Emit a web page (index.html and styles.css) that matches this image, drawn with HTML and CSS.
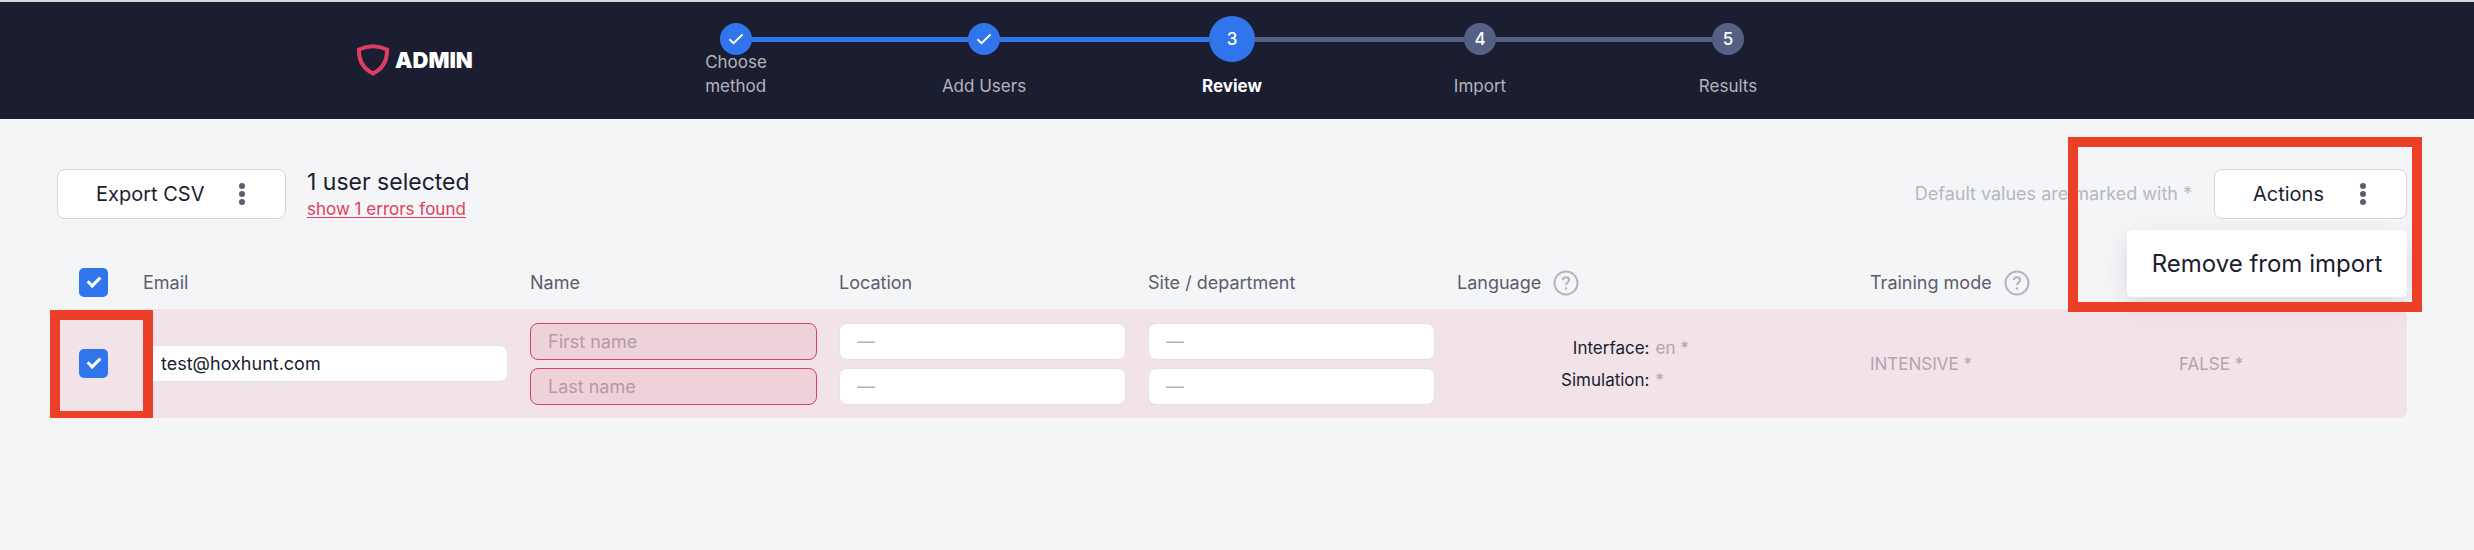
FILE: index.html
```html
<!DOCTYPE html>
<html lang="en">
<head>
    <meta charset="UTF-8">
    <meta name="viewport" content="width=device-width, initial-scale=1.0">
    <title>Admin - Review users</title>
    <link rel="stylesheet" href="styles.css">
</head>
<body>
    <header class="header">
        <div class="header-inner">
            <div class="logo">
                <svg width="32" height="32" viewBox="0 0 32 32" aria-hidden="true">
                    <path d="M2 5.5C11 1.2 21 1.2 30 5.5C30.4 16.500 25 25 16 29.500C7 25 1.600 16.500 2 5.500Z" fill="none" stroke="#dc3f60" stroke-width="4"/>
                </svg>
                <span>ADMIN</span>
            </div>
            <ol class="steps">
                <li class="step done">
                    <div class="marker"><span class="dot"><svg width="16" height="12" viewBox="0 0 16 12"><path d="M1.500 6.200L5.500 10.200L14.500 1.500" fill="none" stroke="#fff" stroke-width="2"/></svg></span></div>
                    <div class="step-label"><span>Choose<br>method</span></div>
                </li>
                <li class="step done">
                    <div class="marker"><span class="dot"><svg width="16" height="12" viewBox="0 0 16 12"><path d="M1.500 6.200L5.500 10.200L14.500 1.500" fill="none" stroke="#fff" stroke-width="2"/></svg></span></div>
                    <div class="step-label"><span>Add Users</span></div>
                </li>
                <li class="step active" aria-current="step">
                    <div class="marker"><span class="dot">3</span></div>
                    <div class="step-label"><span>Review</span></div>
                </li>
                <li class="step">
                    <div class="marker"><span class="dot">4</span></div>
                    <div class="step-label"><span>Import</span></div>
                </li>
                <li class="step">
                    <div class="marker"><span class="dot">5</span></div>
                    <div class="step-label"><span>Results</span></div>
                </li>
            </ol>
        </div>
    </header>

    <main class="main">
        <div class="toolbar">
            <button class="btn btn-export" type="button">
                Export CSV
                <svg width="6" height="22" viewBox="0 0 6 22" fill="#5e5c6e"><circle cx="3" cy="3" r="3"/><circle cx="3" cy="11" r="3"/><circle cx="3" cy="19" r="3"/></svg>
            </button>
            <div class="summary">
                <div class="selected">1 user selected</div>
                <a class="errors" href="#">show 1 errors found</a>
            </div>
            <div class="hint">Default values are marked with *</div>
            <div class="actions">
                <button class="btn" type="button" aria-expanded="true">
                    Actions
                    <svg width="6" height="22" viewBox="0 0 6 22" fill="#5e5c6e"><circle cx="3" cy="3" r="3"/><circle cx="3" cy="11" r="3"/><circle cx="3" cy="19" r="3"/></svg>
                </button>
                <div class="menu">
                    <button class="menu-item" type="button">Remove from import</button>
                </div>
                <div class="highlight highlight-actions"></div>
            </div>
        </div>

        <div class="table-wrap">
            <table class="users">
                <colgroup>
                    <col class="col-check">
                    <col class="col-email">
                    <col class="col-field">
                    <col class="col-field">
                    <col class="col-field">
                    <col class="col-language">
                    <col class="col-field">
                    <col class="col-last">
                </colgroup>
                <thead>
                    <tr>
                        <th class="check"><input type="checkbox" aria-label="Select all users" checked></th>
                        <th>Email</th>
                        <th>Name</th>
                        <th>Location</th>
                        <th>Site / department</th>
                        <th>
                            <div class="th-help">
                                Language
                                <svg width="26" height="26" viewBox="0 0 26 26" fill="none" stroke="#b3b4bd"><circle cx="13" cy="13" r="11.500" stroke-width="2"/><path d="M9.800 10.200C9.900 8.200 11.200 7.200 13 7.200C14.900 7.200 16.200 8.300 16.200 9.900C16.200 12.200 13 12.300 13 15.200" stroke-width="2"/><circle cx="13" cy="18.500" r="1.300" fill="#b3b4bd" stroke="none"/></svg>
                            </div>
                        </th>
                        <th>
                            <div class="th-help">
                                Training mode
                                <svg width="26" height="26" viewBox="0 0 26 26" fill="none" stroke="#b3b4bd"><circle cx="13" cy="13" r="11.500" stroke-width="2"/><path d="M9.800 10.200C9.900 8.200 11.200 7.200 13 7.200C14.900 7.200 16.200 8.300 16.200 9.900C16.200 12.200 13 12.300 13 15.200" stroke-width="2"/><circle cx="13" cy="18.500" r="1.300" fill="#b3b4bd" stroke="none"/></svg>
                            </div>
                        </th>
                        <th></th>
                    </tr>
                </thead>
                <tbody>
                    <tr>
                        <td class="check"><input type="checkbox" aria-label="Select test@hoxhunt.com" checked></td>
                        <td><input class="field" type="text" aria-label="Email" value="test@hoxhunt.com"></td>
                        <td>
                            <div class="fields">
                                <input class="field error" type="text" aria-label="First name" placeholder="First name">
                                <input class="field error" type="text" aria-label="Last name" placeholder="Last name">
                            </div>
                        </td>
                        <td>
                            <div class="fields">
                                <input class="field" type="text" aria-label="Country" placeholder="—">
                                <input class="field" type="text" aria-label="City" placeholder="—">
                            </div>
                        </td>
                        <td>
                            <div class="fields">
                                <input class="field" type="text" aria-label="Site" placeholder="—">
                                <input class="field" type="text" aria-label="Department" placeholder="—">
                            </div>
                        </td>
                        <td>
                            <dl class="language">
                                <dt>Interface:</dt>
                                <dd>en *</dd>
                                <dt>Simulation:</dt>
                                <dd>*</dd>
                            </dl>
                        </td>
                        <td class="default">INTENSIVE *</td>
                        <td class="default">FALSE *</td>
                    </tr>
                </tbody>
            </table>
            <div class="highlight highlight-check"></div>
        </div>
    </main>
</body>
</html>
```

FILE: styles.css
```css
*, *::before, *::after { box-sizing: border-box; }
body { margin: 0; font-family: Inter, "Open Sans", sans-serif; font-size: 17px; line-height: 24px; color: #1b1d31; background: #f4f5f7; }
input, button { font-family: inherit; font-size: inherit; color: inherit; }

/* header */
.header { border-top: 2px solid #d5d9dc; background: #1b1d31; color: #fff; }
.header-inner { display: flex; max-width: 1760px; margin: 0 auto; padding: 14px 0 21px; }
.logo { display: flex; align-items: center; gap: 6px; width: 255px; padding-top: 5px; font-size: 22px; font-weight: 900; }
.steps { display: flex; flex: 0 1 1240px; margin: 0; padding: 0; list-style: none; }
.step { flex: 1; }
.marker { display: flex; align-items: center; height: 46px; }
.marker::before, .marker::after { content: ""; flex: 1; height: 5px; background: #566084; }
.done .marker::before, .done .marker::after, .active .marker::before { background: #3175ed; }
.step:first-child .marker::before, .step:last-child .marker::after { background: none; }
.dot { display: flex; align-items: center; justify-content: center; width: 32px; height: 32px; border-radius: 50%; background: #566084; font-weight: 500; }
.done .dot, .active .dot { background: #3175ed; }
.active .dot { width: 46px; height: 46px; }
/* two-line labels grow upwards */
.step-label { display: flex; align-items: flex-end; justify-content: center; height: 24px; margin-top: 12px; color: #b4b5bb; }
.active .step-label { color: #fff; font-weight: 700; }

/* toolbar */
.main { padding: 50px 67px 0 57px; }
.toolbar { display: flex; align-items: center; height: 50px; }
.btn { display: flex; align-items: center; justify-content: space-between; width: 193px; height: 50px; padding: 0 40px 0 38px; border: 1px solid #d5d6d9; border-radius: 8px; background: #fff; font-size: 20px; cursor: pointer; }
.btn-export { width: 229px; }
.summary { margin-left: 21px; }
.selected { font-size: 23px; line-height: 30px; }
.errors { display: block; color: #dc3f60; text-underline-offset: 2px; }
.hint { margin-left: auto; margin-right: 22px; font-size: 18px; color: #b6b8c0; }
.actions { position: relative; }
.menu { position: absolute; top: 61px; right: 0; z-index: 1; border-radius: 5px; background: #fff; box-shadow: 0 8px 24px rgba(27,29,49,0.12); }
.menu-item { width: 280px; height: 67px; padding: 0; border: none; background: none; font-size: 24px; white-space: nowrap; cursor: pointer; }

/* users table */
.table-wrap { position: relative; margin-top: 41px; }
.users { width: 100%; table-layout: fixed; border-spacing: 0; font-size: 18px; }
.col-check { width: 86px; }
.col-email { width: 387px; }
.col-field { width: 309px; }
.col-language { width: 413px; }
.col-last { width: 228px; }
th { height: 49px; padding: 0 22px 4px 0; color: #5d5c6e; font-weight: 400; text-align: left; white-space: nowrap; }
.th-help { display: flex; align-items: center; gap: 12px; }
td { height: 109px; padding: 0 22px 0 0; background: #f2e3e8; }
td:first-child { border-radius: 8px 0 0 8px; }
td:last-child { border-radius: 0 8px 8px 0; }
.check { padding-left: 22px; }
.check input { appearance: none; display: flex; justify-content: center; width: 29px; height: 29px; margin: 0; border-radius: 5px; background: #3175ed; }
.check input:checked::after { content: ""; width: 8px; height: 13px; margin-top: 6px; border: solid #fff; border-width: 0 3px 3px 0; transform: rotate(45deg); }
.fields { display: flex; flex-direction: column; gap: 8px; }
.field { display: block; width: 100%; height: 37px; padding: 0 17px; border: 1px solid #e3e1e5; border-radius: 8px; background: #fff; }
.field::placeholder { color: #b3b2bb; }
.error { border-color: #dc3f60; background: #eed2da; }
.error::placeholder { color: #b39ba7; }
.language { display: grid; grid-template-columns: 1fr 1fr; column-gap: 6px; margin: 0; font-size: 17px; line-height: 32px; }
.language dt { text-align: right; }
.language dd { margin: 0; }
.language dd, .default { color: #b0a6ae; }
.default { font-size: 17px; }

/* red call-out frames */
.highlight { position: absolute; z-index: 2; border: 10px solid #eb4027; pointer-events: none; }
.highlight-actions { top: -32px; right: -15px; width: 354px; height: 175px; }
.highlight-check { top: 50px; left: -7px; width: 103px; height: 111px; }
```
